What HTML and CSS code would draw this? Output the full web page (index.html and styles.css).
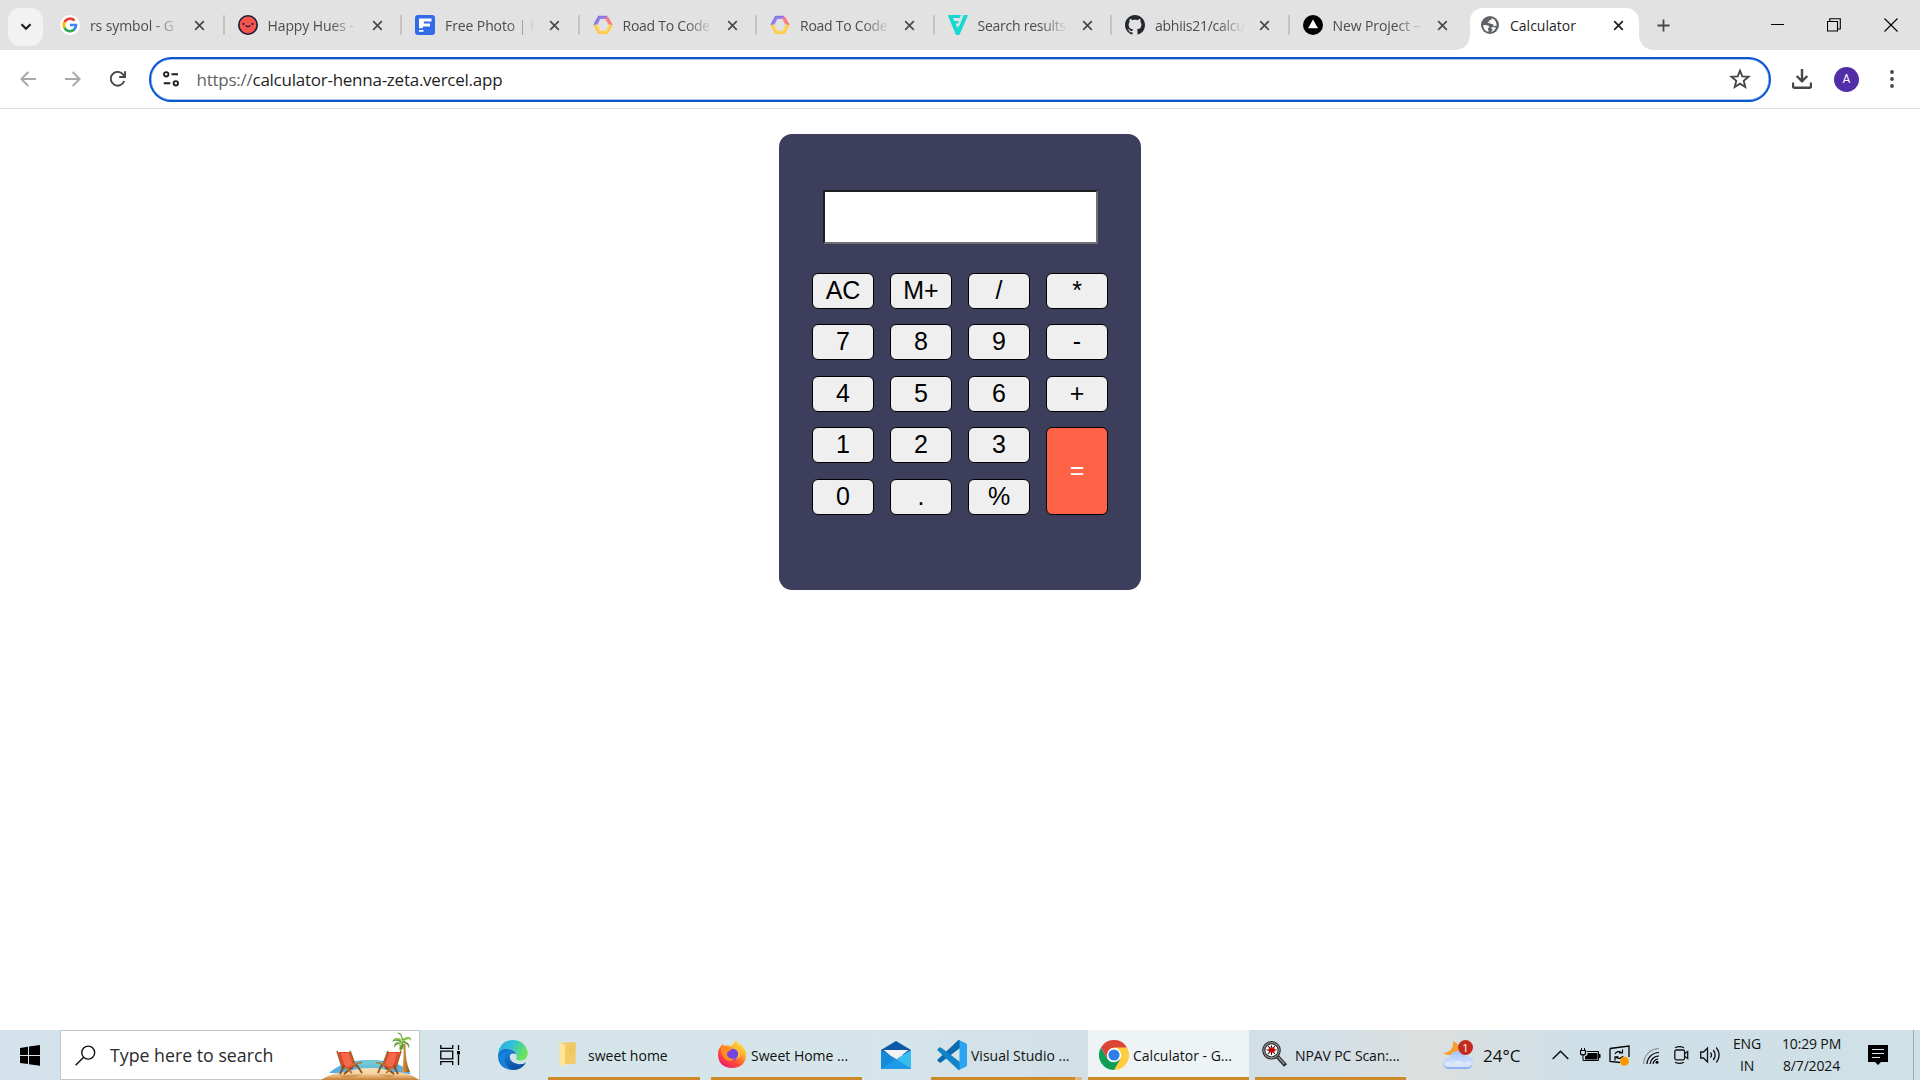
FILE: index.html
```html
<!DOCTYPE html>
<html lang="en">
<head>
<meta charset="utf-8">
<title>Calculator</title>
<link rel="stylesheet" href="styles.css">
</head>
<body>
<svg class="defs" aria-hidden="true">
  <symbol id="close" viewBox="0 0 12 12"><path d="M1.3 1.3l9.4 9.4M10.7 1.3L1.3 10.7" fill="none" stroke="currentColor" stroke-width="1.9"/></symbol>
  <symbol id="hexagon" viewBox="0 0 20 20">
    <g fill="none" stroke-width="3.4">
      <path d="M2 10.4L6.2 2.4H14" stroke="#8573e6"/>
      <path d="M13.4 2.4L18 10.4" stroke="#fb7378"/>
      <path d="M2 9.8L6.2 17.4H13.8L18 9.8" stroke="#ffcb45"/>
    </g>
    <path d="M3 10L6.6 3H13.4L17 10L13.4 17H6.6Z" fill="none" stroke="#fff" stroke-opacity=".3" stroke-width=".7"/>
  </symbol>
</svg>

<header class="tabstrip">
  <button class="tab-search"><svg width="12" height="8" viewBox="0 0 12 8"><path d="M1.5 1.3L6 5.8L10.5 1.3" fill="none" stroke="#1f1f1f" stroke-width="2.2"/></svg></button>
  <div class="tab">
    <svg class="favicon" viewBox="0 0 20 20"><circle cx="10" cy="10" r="10" fill="#fff"/><g fill="none" stroke-width="2.7"><path d="M14.6 5.6A6.2 6.2 0 0 0 4.5 7.2" stroke="#ea4335"/><path d="M4.6 7A6.2 6.2 0 0 0 4.6 13" stroke="#fbbc05"/><path d="M4.5 12.8A6.2 6.2 0 0 0 14.2 14.6" stroke="#34a853"/><path d="M10 10H16A6.2 6.2 0 0 1 13.8 14.9" stroke="#4285f4"/></g></svg>
    <span class="title">rs symbol - G</span><svg class="close"><use href="#close"/></svg>
  </div>
  <div class="tab">
    <svg class="favicon" viewBox="0 0 20 20"><circle cx="10" cy="10" r="9.2" fill="#f2564f" stroke="#1d1538" stroke-width="1.6"/><circle cx="5.5" cy="9" r="1.1" fill="#1d1538"/><circle cx="14.5" cy="9" r="1.1" fill="#1d1538"/><path d="M7.6 10.5Q10 13 12.400 10.500" fill="none" stroke="#1d1538" stroke-width="1.100"/></svg>
    <span class="title">Happy Hues -</span><svg class="close"><use href="#close"/></svg>
  </div>
  <div class="tab">
    <svg class="favicon" viewBox="0 0 20 20"><rect width="20" height="20" rx="3" fill="#336aea"/><path d="M4 3.5H16.5V6.6H8.8V8.6H15V11.6H8.2L7.6 13.2H4ZM4 15H8.5V16.8H4Z" fill="#fff"/></svg>
    <span class="title">Free Photo | F</span><svg class="close"><use href="#close"/></svg>
  </div>
  <div class="tab">
    <svg class="favicon"><use href="#hexagon"/></svg>
    <span class="title tight">Road To Code</span><svg class="close"><use href="#close"/></svg>
  </div>
  <div class="tab">
    <svg class="favicon"><use href="#hexagon"/></svg>
    <span class="title tight">Road To Code</span><svg class="close"><use href="#close"/></svg>
  </div>
  <div class="tab">
    <svg class="favicon" viewBox="0 0 20 20"><path d="M0 1Q0 0 1 0H13L11.7 3H5L6.3 6H11L10 8.5H7.6L9.5 13.2L14.8 0H19Q20 0 19.7 1L11.7 19.3Q11.2 20.4 8.8 20Q8 20 7.6 19Z" fill="#16d8ce"/><path d="M15.2 0L11 10.8" stroke="#e2e2e2" stroke-width="1"/></svg>
    <span class="title tight">Search results</span><svg class="close"><use href="#close"/></svg>
  </div>
  <div class="tab">
    <svg class="favicon" viewBox="0 0 16 16"><path fill="#24292f" d="M8 0C3.58 0 0 3.58 0 8c0 3.54 2.29 6.53 5.47 7.59.4.07.55-.17.55-.38 0-.19-.01-.82-.01-1.49-2.01.37-2.53-.49-2.69-.94-.09-.23-.48-.94-.82-1.13-.28-.15-.68-.52-.01-.53.63-.01 1.08.58 1.23.82.72 1.21 1.87.87 2.33.66.07-.52.28-.87.51-1.07-1.78-.2-3.64-.89-3.64-3.95 0-.87.31-1.59.82-2.15-.08-.2-.36-1.02.08-2.12 0 0 .67-.21 2.2.82.64-.18 1.32-.27 2-.27s1.36.09 2 .27c1.53-1.04 2.2-.82 2.2-.82.44 1.1.16 1.92.08 2.12.51.56.82 1.27.82 2.15 0 3.07-1.87 3.75-3.65 3.95.29.25.54.73.54 1.48 0 1.07-.01 1.93-.01 2.2 0 .21.15.46.55.38A8.01 8.01 0 0 0 16 8c0-4.42-3.58-8-8-8z"/></svg>
    <span class="title tight">abhiis21/calcu</span><svg class="close"><use href="#close"/></svg>
  </div>
  <div class="tab">
    <svg class="favicon" viewBox="0 0 20 20"><circle cx="10" cy="10" r="10"/><path d="M10 4.6L15 13.3H5Z" fill="#fff"/></svg>
    <span class="title">New Project –</span><svg class="close"><use href="#close"/></svg>
  </div>
  <div class="tab active">
    <svg class="favicon globe" viewBox="0 0 18 18"><circle cx="9" cy="9" r="9" fill="#5f6368"/><path d="M2 9.2Q5 8.8 7.4 9.8Q8.6 10.4 8.4 11.5L7 12V13.2Q8 14 7.4 15.8Q3 15 2 9.2ZM10.6 2.2V3.6L8 4.6L8.8 7.4L12.2 8.2L12.4 10.2L15.8 9.6Q15.6 6 13.2 3.6L11.5 2.4ZM8.8 7.4L6.8 6.8L7 5ZM10 15.8L12 13.6L10 12.6L11 11L15 11.4Q13.4 15.2 10 15.8Z" fill="#fff"/></svg>
    <span class="title">Calculator</span><svg class="close"><use href="#close"/></svg>
  </div>
  <svg class="new-tab" viewBox="0 0 14 14"><path d="M7 .5V13.5M.5 7H13.5" stroke="#474747" stroke-width="1.9"/></svg>
  <div class="window-controls">
    <svg width="13" height="14" viewBox="0 0 13 14"><path d="M0 6.5H13" stroke="#000"/></svg>
    <svg width="14" height="14" viewBox="0 0 14 14"><path d="M.5 3.5H10.5V13H.5ZM2.8 3V.7H13.3V11H11" fill="none" stroke="#000" stroke-width="1.1"/></svg>
    <svg width="14" height="14" viewBox="0 0 14 14"><path d="M.5 .5L13.5 13.5M13.5 .5L.5 13.5" stroke="#000" stroke-width="1.1"/></svg>
  </div>
</header>

<nav class="toolbar">
  <svg class="nav-icon" viewBox="0 0 16 16"><path d="M16 8H1.5M8.3 1L1.3 8L8.3 15" fill="none" stroke="#a9a9a9" stroke-width="1.9"/></svg>
  <svg class="nav-icon" viewBox="0 0 16 16"><path d="M0 8H14.5M7.7 1L14.7 8L7.7 15" fill="none" stroke="#a9a9a9" stroke-width="1.9"/></svg>
  <svg class="nav-icon" viewBox="0 0 16 16"><path d="M14.2 10A6.9 6.9 0 1 1 13 3.4L14.8 5.4M15 .2V6H9.2" fill="none" stroke="#474747" stroke-width="1.9"/></svg>
  <div class="omnibox">
    <svg class="tune" viewBox="0 0 16 16"><g fill="none" stroke="#1f1f1f" stroke-width="1.9"><circle cx="3.2" cy="3.3" r="2.2"/><path d="M8.5 3.3H15M.8 12.3H7.3"/><circle cx="12.8" cy="12.3" r="2.2"/></g></svg>
    <span class="url"><span class="scheme">https://</span>calculator-henna-zeta.vercel.app</span>
    <svg class="star" viewBox="0 0 20 20"><path d="M10 2.4L12.1 7.6L17.8 8L13.4 11.7L14.8 17.2L10 14.2L5.2 17.2L6.6 11.7L2.2 8L7.9 7.6Z" fill="none" stroke="#474747" stroke-width="1.7"/></svg>
  </div>
  <svg class="download" viewBox="0 0 20 20"><path d="M10 0V12M4.7 7L10 12.4L15.3 7M1 13.5V17.3Q1 18.7 2.4 18.7H17.6Q19 18.7 19 17.3V13.5" fill="none" stroke="#474747" stroke-width="2.4"/></svg>
  <span class="avatar">A</span>
  <svg class="menu" viewBox="0 0 4 18"><g fill="#474747"><circle cx="2" cy="2" r="1.9"/><circle cx="2" cy="9" r="1.9"/><circle cx="2" cy="16" r="1.9"/></g></svg>
</nav>

<main class="page">
  <section class="calculator">
    <input class="display" type="text" aria-label="Result">
    <div class="keys">
      <button>AC</button><button>M+</button><button>/</button><button>*</button>
      <button>7</button><button>8</button><button>9</button><button>-</button>
      <button>4</button><button>5</button><button>6</button><button>+</button>
      <button>1</button><button>2</button><button>3</button><button class="equals">=</button>
      <button>0</button><button>.</button><button>%</button>
    </div>
  </section>
</main>

<footer class="taskbar">
  <div class="start"><svg width="20" height="21" viewBox="0 0 20 21"><path d="M0 3L8 1.8V9.9H0ZM9 1.6L20 0V9.9H9ZM0 10.9H8V19L0 17.9ZM9 10.9H20V20.8L9 19.2Z"/></svg></div>
  <div class="search">
    <svg width="21" height="21" viewBox="0 0 21 21"><circle cx="13.2" cy="7.6" r="6.5" fill="none" stroke="#111" stroke-width="1.4"/><path d="M8.6 12.3L.6 20.3" stroke="#111" stroke-width="1.5"/></svg>
    <span>Type here to search</span>
    <svg class="beach" viewBox="0 0 98 49">
      <defs><linearGradient id="sand" x2="0" y2="1"><stop stop-color="#ffe3b8"/><stop offset=".5" stop-color="#f5cf9c"/><stop offset="1" stop-color="#c47f35"/></linearGradient><linearGradient id="sea" x2="0" y2="1"><stop stop-color="#7ad2ce"/><stop offset="1" stop-color="#5bb4e6"/></linearGradient><linearGradient id="trunk"><stop stop-color="#e2a046"/><stop offset="1" stop-color="#8b4f12"/></linearGradient></defs>
      <path d="M8 42Q22 29 49 29Q80 29 90 43Z" fill="#5aaee8"/><path d="M34 33Q49 26 66 33L62 40H36Z" fill="url(#sea)"/>
      <path d="M0 49Q12 41 25 41Q36 37 49 37Q62 37 72 41Q87 40 98 49Z" fill="url(#sand)"/>
      <path d="M18 44L42 43L34 46L24 47ZM56 43L75 44L68 47Z" fill="#b06a25" opacity=".35"/>
      <path d="M82 13H84.500Q84 30 89 41H81Q83.500 25 82 13Z" fill="url(#trunk)"/>
      <path d="M81 11Q75 3 71 11Q76 8 80 12Q73 9 73 17Q76 12 81 13Q77 15 79 20Q84 17 82 12Q87 12 88 18Q90 12 83 10Q88 6 90 10Q90 3 82 8Q80 0 76 2Q81 3 81 11Z" fill="#629f3a"/>
      <path d="M74 9Q79 6 82 10Q87 6 90 8M78 15Q80 11 82 11" fill="none" stroke="#a4ce55" stroke-width="1.2"/>
      <path d="M17 21H29L34 35Q28 40 21 37Z" fill="#e9452f"/><path d="M20 22H27.500L32 34Q28 37 23.500 35Z" fill="#f3694c"/>
      <path d="M16 20L22 39M29 20L35 36" stroke="#9c6424" stroke-width="1.600"/><path d="M19 43L23.500 34M32 36L23 43M35 33L41 42" fill="none" stroke="#85501a" stroke-width="1.800"/><path d="M30 34L41 31.500M24 36L31 42" stroke="#b77a33" stroke-width="1.700"/>
      <path d="M79 21H67L62 35Q68 40 75 37Z" fill="#e9452f"/><path d="M76 22H68.500L64 34Q68 37 72.500 35Z" fill="#f3694c"/>
      <path d="M80 20L74 39M67 20L61 36" stroke="#9c6424" stroke-width="1.600"/><path d="M77 43L72.500 34M64 36L73 43M61 33L57 42" fill="none" stroke="#85501a" stroke-width="1.800"/><path d="M66 34L55 31.500M72 36L65 42" stroke="#b77a33" stroke-width="1.700"/>
    </svg>
  </div>
  <div class="pin"><svg width="20" height="20" viewBox="0 0 20 20"><g fill="none" stroke="#000" stroke-width="1.3"><path d="M.8 0V3.4H12.7V0M.8 6.2H12.7V13.8H.8ZM.8 20V16.7H12.7V20M18.5 0V5M18.5 10V20"/></g><path d="M17 6H20V9.5H17Z"/></svg></div>
  <div class="pin edge">
    <svg width="30" height="30" viewBox="0 0 30 30">
      <defs><linearGradient id="eg" x2="1" y2=".4"><stop stop-color="#27a9e8"/><stop offset=".5" stop-color="#2fc4d4"/><stop offset="1" stop-color="#6ce35c"/></linearGradient><linearGradient id="eb" y1="0" x2=".3" y2="1"><stop stop-color="#168be0"/><stop offset="1" stop-color="#0e4d9f"/></linearGradient></defs>
      <path d="M.2 14Q1.5 0 15 0Q26 0 29.5 11Q31 20 22 20.5Q17 20.5 18.6 17.4Q19 11 12 9Q5 7.5 .2 14Z" fill="url(#eg)"/>
      <path d="M.2 14Q4 7.5 11 9Q17 10.3 18 14Q12 12 11.5 17Q12 26 21 25.5Q26 25 28 22.5Q23 30.5 14 30Q-1 28.5 .2 14Z" fill="#1474cf"/>
      <path d="M10 11Q4 18 8.4 25Q11 29 16 30Q24 29.5 28.2 22.3Q26 24.4 21 24.2Q12.5 23 11.6 17Q11.5 13.5 14.5 12Q12 10 10 11Z" fill="url(#eb)"/>
      <path d="M1 17Q3 11 10 11Q5 16 7.4 23Q9 27.5 14 30Q2 28 1 17Z" fill="#1689df" opacity=".7"/>
    </svg>
  </div>
  <div class="task folder">
    <svg width="18" height="26" viewBox="0 0 18 26"><path d="M1 .5H16.5V21L18 22H6V3Z" fill="#f3cb69"/><path d="M10 .5H16.5V13H10Z" fill="#f0c75e"/><path d="M.4 .8L6 3.5V25.5L.4 22Z" fill="#ffe69b"/></svg>
    <span>sweet home</span>
  </div>
  <div class="task firefox">
    <svg width="28" height="28" viewBox="0 0 28 28">
      <defs><linearGradient id="ff" x1=".9" y1="0" x2=".2" y2="1"><stop stop-color="#fff44a"/><stop offset=".35" stop-color="#ffb02a"/><stop offset=".65" stop-color="#ff5032"/><stop offset="1" stop-color="#e91372"/></linearGradient></defs>
      <path d="M3 6L4.5 4L6.5 6Q8 5 10 5.5L13.5 6Q15 4 18 0Q19 3 23 5Q28 9 28 15Q27.5 27.5 14 28Q.8 27.5 0 15Q0 9 3 6Z" fill="url(#ff)"/>
      <circle cx="14.5" cy="14.5" r="6" fill="#7542e5"/><path d="M3 6Q6 5 9 7L13 9Q14 10 11 11Q8 13 9.5 16Q12 20 17 18Q14 23 8 20Q2 15 3 6Z" fill="#ff8a24"/><path d="M13 9Q18 8 20 12Q21 17 17 19Q23 18 23 12Q21 7 16 7Z" fill="#ffbd35"/>
    </svg>
    <span>Sweet Home ...</span>
  </div>
  <div class="pin mail"><svg width="30" height="28" viewBox="0 0 30 28"><path d="M0 9L15 0L30 9V14H0Z" fill="#0b57a8"/><path d="M2.5 9H27.5L15 19Z" fill="#f2f2f2"/><path d="M0 9L16 18.5L30 28H0Z" fill="#168bdc"/><path d="M30 9L15.5 18L30 27Z" fill="#37bdf0"/><path d="M0 28H30V27L15.5 18Z" fill="#1e9be8"/></svg></div>
  <div class="task vscode">
    <svg width="30" height="30" viewBox="0 0 30 30"><path d="M21.5 0L23 .3V8L4 22.6Q3.2 23 2.5 22.5L.6 21Q0 20.2.7 19.4L20.3 1Z" fill="#0b6ab0"/><path d="M21.5 30L23 29.7V22L4 7.4Q3.2 7 2.5 7.5L.6 9Q0 9.8.7 10.6L20.3 29Z" fill="#1283c8"/><path d="M21.8 0L29 3.2Q30 3.8 30 5V25Q30 26.2 29 26.8L21.8 30Q22.5 29.5 22.5 28V2Q22.5.5 21.8 0Z" fill="#2aa5f2"/></svg>
    <span>Visual Studio ...</span>
  </div>
  <div class="task chrome">
    <svg width="30" height="30" viewBox="0 0 30 30"><path d="M15 15L2 7.5A15 15 0 0 1 28 7.5Z" fill="#db4437"/><path d="M15 15L15 7.5H28A15 15 0 0 1 15 30Z" fill="#ffcd40"/><path d="M2 7.5L8.5 18.8Q11 22.5 15 22L21.5 18.8L15 30A15 15 0 0 1 2 7.5Z" fill="#0f9d58"/><path d="M2 7.5H28Q28 8 28 7.5H15L8.5 18.8Z" fill="#db4437"/><circle cx="15" cy="15" r="7.2" fill="#fff"/><circle cx="15" cy="15" r="5.6" fill="#2f7de9"/></svg>
    <span>Calculator - G...</span>
  </div>
  <div class="task npav">
    <svg width="25" height="26" viewBox="0 0 25 26"><path d="M14 14L23.500 24.500" stroke="#222" stroke-width="4"/><path d="M14.500 14.500L22.500 23.200" stroke="#888" stroke-width="1.800"/><circle cx="9.500" cy="9.300" r="7.700" fill="#fff" stroke="#222" stroke-width="3.200"/><circle cx="9.500" cy="9.300" r="7.700" fill="none" stroke="#8a8a8a" stroke-width="1.400"/><path d="M6 5L13 13M13 5L6 13M4.500 9H14.500M9.500 4.500V14" stroke="#111" stroke-width="1.100"/><ellipse cx="9.700" cy="9" rx="3.300" ry="2.800" fill="#e40b0b"/><path d="M7 9H12" stroke="#500" stroke-width=".8"/></svg>
    <span>NPAV PC Scan:...</span>
  </div>
  <div class="tray">
    <span class="weather">
      <svg width="30" height="30" viewBox="0 0 30 30"><defs><linearGradient id="cl" x2="0" y2="1"><stop stop-color="#a4c4fa"/><stop offset=".6" stop-color="#c9dcfb"/><stop offset="1" stop-color="#85a9f2"/></linearGradient></defs><path d="M10 1Q18 4 15 12Q8 18 0 13Q11 12 10 1Z" fill="#f5a031"/><path d="M6 29Q0 28.500 0 23Q0 18 6.500 17.500Q8 11 15 11Q21 11 23 16Q30 16 30 22.500Q29.500 29 24 29Z" fill="url(#cl)"/><path d="M1 24Q5 20 9 23Q17 18 21 23Q27 20 29 24Q28 27 24 27H6Q2 27 1 24Z" fill="#e4eefd" opacity=".8"/></svg>
      <b class="badge">1</b>
    </span>
    <span class="temp">24°C</span>
    <svg class="chevron" width="17" height="10" viewBox="0 0 17 10"><path d="M.7 9L8.500 1.200L16.300 9" fill="none" stroke="#111" stroke-width="1.500"/></svg>
    <svg class="battery" width="21" height="14" viewBox="0 0 21 14"><path d="M1.500 0V2.500M4.500 0V2.500M3 6V12.500H6" fill="none" stroke="#000"/><path d="M.5 2.500H5.500V5Q5.500 7 3 7Q.5 7 .5 5Z" fill="none" stroke="#000" stroke-width="1.200"/><path d="M7 3.500H18.500V12.500H5" fill="none" stroke="#000"/><path d="M7.500 5H17.500V11.500H5V8.500L7.500 7ZM19 6H20.500V10H19Z"/></svg>
    <svg class="sync" width="21" height="21" viewBox="0 0 21 21"><path d="M1 3.500L20 1V12M11 17.500L1 16.500V3.500" fill="none" stroke="#000" stroke-width="1.300"/><path d="M6 9Q8 5 12.500 7.500M13.500 4.500V8H10M14 11Q12 15 7 12.500M6 15.500V11.800H9.500" fill="none" stroke="#000" stroke-width="1.200"/><circle cx="15.500" cy="16.200" r="4.500" fill="#ff9800"/></svg>
    <svg class="wifi" width="16" height="16" viewBox="0 0 16 16"><g fill="none" stroke="#000" stroke-width="1.200"><path d="M.7 16A15.300 15.300 0 0 1 16 .7" stroke="#8b969b"/><path d="M4 16A12 12 0 0 1 16 4.500M7 16A9 9 0 0 1 16 8M10 16A6 6 0 0 1 15 11"/></g><circle cx="14" cy="14.300" r="1.500"/></svg>
    <svg class="camera" width="15" height="18" viewBox="0 0 15 18"><g fill="none" stroke="#111" stroke-width="1.300"><rect x=".8" y="4" width="9.800" height="9.800" rx="1.500"/><path d="M11 7.500L13.700 5.500V12.500L11 10.500M1 1.800Q5.500 -.6 10 1.800M1 16.200Q5.500 18.600 10 16.200"/></g></svg>
    <svg class="volume" width="21" height="18" viewBox="0 0 21 18"><g fill="none" stroke="#111" stroke-width="1.300"><path d="M.7 6H3.500L7.500 2V16L3.500 12H.7Z"/><path d="M10.500 6.500Q12.500 9 10.500 11.500M13.300 4Q17 9 13.300 14M16.300 1.500Q22 9 16.300 16.500"/></g></svg>
    <span class="stack language"><span>ENG</span><span>IN</span></span>
    <span class="stack clock"><span>10:29 PM</span><span>8/7/2024</span></span>
    <svg class="notice" width="20" height="20" viewBox="0 0 20 20"><path d="M0 0H20V17H13L10 20L7 17H0Z"/><path d="M4 4.500H16M4 8.500H16M4 12.500H12" stroke="#dce8ee" stroke-width="1.200"/></svg>
    <span class="show-desktop"></span>
  </div>
</footer>
</body>
</html>
```
FILE: styles.css
```css
* { box-sizing: border-box; }

body {
  display: flex;
  flex-direction: column;
  width: 1920px;
  height: 1080px;
  margin: 0;
  overflow: hidden;
  background: #fff;
  font: 14px "Open Sans", "Noto Sans", sans-serif;
  color: #1f1f1f;
}

svg { display: block; flex: none; }
button { font: inherit; padding: 0; }
.defs { width: 0; height: 0; position: absolute; }

/* Tab strip */
.tabstrip {
  display: flex;
  height: 50px;
  padding-left: 8px;
  background: #e2e2e2;
}

.tab-search {
  display: flex;
  align-items: center;
  justify-content: center;
  width: 35px;
  height: 38px;
  margin: 8px 3px 0 0;
  border: 0;
  border-radius: 12px;
  background: #f2f2f2;
}

.tab {
  position: relative;
  display: flex;
  align-items: center;
  width: 177.500px;
  height: 50px;
  padding: 6px 0 0 14px;
  color: #4c4c4c;
}

.tab:not(.active)::after {
  content: "";
  position: absolute;
  right: -1px;
  top: 15px;
  width: 2px;
  height: 20px;
  border-radius: 1px;
  background: #c3c3c3;
}

.tab:nth-last-of-type(3)::after { display: none; }

.favicon { width: 20px; height: 20px; margin-top: -6px; }

.title {
  width: 92px;
  margin: -5px 0 0 10px;
  white-space: nowrap;
  letter-spacing: -0.1px;
  -webkit-mask-image: linear-gradient(90deg, #000 68%, transparent 98%);
  mask-image: linear-gradient(90deg, #000 68%, transparent 98%);
}

.title.tight { letter-spacing: -0.25px; }

.close { width: 11px; height: 11px; margin: -6px 0 0 12px; }

.tab.active {
  width: 168.500px;
  height: 42px;
  margin: 8px 0 0 4px;
  padding: 0 0 0 11px;
  border-radius: 13px 13px 0 0;
  background: #fff;
  color: #1f1f1f;
}

.tab.active::before,
.tab.active::after {
  content: "";
  position: absolute;
  bottom: 0;
  width: 14px;
  height: 14px;
}

.tab.active::before { left: -14px; background: radial-gradient(circle at 0 0, transparent 13.500px, #fff 14px); }
.tab.active::after { right: -14px; background: radial-gradient(circle at 100% 0, transparent 13.500px, #fff 14px); }
.tab.active .favicon { width: 18px; height: 18px; margin-top: -8px; }
.tab.active .title { margin-top: -8px; margin-left: 11px; width: 92px; letter-spacing: 0; -webkit-mask: none; mask: none; }
.tab.active .close { margin: -8px 0 0 11px; }

.new-tab { width: 13px; height: 13px; margin: 19px 0 0 18px; }

.window-controls {
  display: flex;
  gap: 43px;
  margin: 18px 22px 0 auto;
}

/* Toolbar */
.toolbar {
  display: flex;
  align-items: center;
  height: 59px;
  padding: 0 23px 0 20px;
  border-bottom: 1px solid #e0e0e0;
}

.nav-icon { width: 16px; height: 16px; margin-right: 29px; }
.nav-icon:nth-child(3) { margin-right: 23px; }

.omnibox {
  display: flex;
  align-items: center;
  width: 1622px;
  height: 45px;
  padding: 0 18px 0 12px;
  border: 2.500px solid #0b57d0;
  border-radius: 23px;
  box-shadow: inset 0 0 0 .5px #5c90e4;
}

.tune { width: 16px; height: 16px; }
.url { margin: 0 auto 0 17.500px; font-size: 17px; letter-spacing: -0.25px; }
.scheme { color: #5f6368; }
.star { width: 22px; height: 22px; }
.download { width: 20px; height: 20px; margin-left: 21px; }

.avatar {
  width: 25px;
  height: 25px;
  margin: 0 31px 0 22px;
  border-radius: 50%;
  background: #512da8;
  color: #fff;
  font: 12px/25px Roboto, sans-serif;
  text-align: center;
}

.menu { width: 4px; height: 18px; }

/* Calculator */
.page { flex: 1; padding-top: 25px; }

.calculator {
  display: flex;
  flex-direction: column;
  align-items: center;
  width: 362px;
  height: 456px;
  margin: 0 auto;
  padding-top: 56px;
  border-radius: 13px;
  background: #3d3d5c;
}

.display {
  width: 275px;
  height: 54px;
  margin-left: 1px;
  border: 2px solid;
  border-color: #1f1f1f #707070 #707070 #1f1f1f;
  background: #fff;
  font-size: 25px;
  outline: 0;
}

.keys {
  display: grid;
  grid-template: repeat(5, 36px) / repeat(4, 62px);
  gap: 15.400px 16px;
  margin-top: 29px;
}

.keys button {
  padding-bottom: 2px;
  border: 1px solid #000;
  border-radius: 6px;
  background: #efefef;
  color: #000;
  font: 25px/32px "Liberation Sans", Arial, sans-serif;
}

.keys .equals { grid-row: span 2; background: #ff6347; color: #fff; }

/* Taskbar */
.taskbar {
  display: flex;
  height: 50px;
  background: linear-gradient(90deg, #d4e3eb 0, #d5e5e9 46%, #d1dee7 58%, #d2dfe7 68%, #dcdfde 74.500%, #cfdfe7 82%, #cfe0e7 100%);
  color: #111;
}

.start { display: flex; align-items: center; justify-content: center; width: 60px; }

.search {
  position: relative;
  display: flex;
  align-items: center;
  width: 360px;
  padding-left: 14px;
  border: 1px solid #c3c7c9;
  background: #fff;
  font-size: 17.750px;
  color: #2b2b2b;
}

.search span { margin-left: 14px; }
.beach { position: absolute; right: 0; bottom: -1px; width: 98px; height: 49px; }

.pin { display: flex; align-items: center; justify-content: center; width: 60px; }
.edge { margin-left: 3px; }
.mail { margin-left: 4px; }

.task {
  position: relative;
  display: flex;
  align-items: center;
  width: 151px;
  padding-left: 7px;
  border-bottom: 3px solid #cc8a2b;
  white-space: nowrap;
}

.task svg { margin-top: 3px; }
.task span { margin: 3px 0 0 5px; }
.folder { width: 152px; margin-left: 5px; padding-left: 11px; }
.folder span { margin-left: 11px; }
.firefox { margin-left: 11px; }
.firefox svg { margin-top: 1px; }
.vscode { margin-left: 5px; padding-left: 6px; border-image: linear-gradient(90deg, #cc8a2b 141px, #dcb77f 141px) 3; }
.vscode span { margin-left: 4px; }
.chrome { width: 161px; margin-left: 6px; padding-left: 11px; background: #eef3f6; }
.chrome span { margin-left: 4px; }
.npav { margin-left: 6px; }
.npav svg { margin-top: 0; }
.npav span { margin-left: 8px; letter-spacing: -0.1px; }

.tray { display: flex; flex: 1; align-items: center; padding-left: 37px; }
.weather { position: relative; width: 30px; margin-right: 10px; }

.badge {
  position: absolute;
  top: 0;
  right: 0;
  width: 15px;
  height: 15px;
  border-radius: 50%;
  background: #c42b1c;
  color: #fff;
  font: 11px/15px "Open Sans", sans-serif;
  text-align: center;
}

.temp { width: 69px; font-size: 17px; }
.chevron { margin-right: 11px; }
.battery { margin-right: 8px; }
.sync { margin-right: 13px; }
.wifi { margin: 2px 15px 0 0; }
.camera { margin-right: 11px; }
.volume { margin-right: 7px; }

.stack {
  display: flex;
  flex-direction: column;
  align-items: center;
  line-height: 22px;
  letter-spacing: -0.15px;
}

.language { width: 38px; }
.clock { width: 91px; }
.notice { margin: 0 25px 0 11px; }
.show-desktop { align-self: stretch; border-left: 1px solid #9dabb1; }
```
